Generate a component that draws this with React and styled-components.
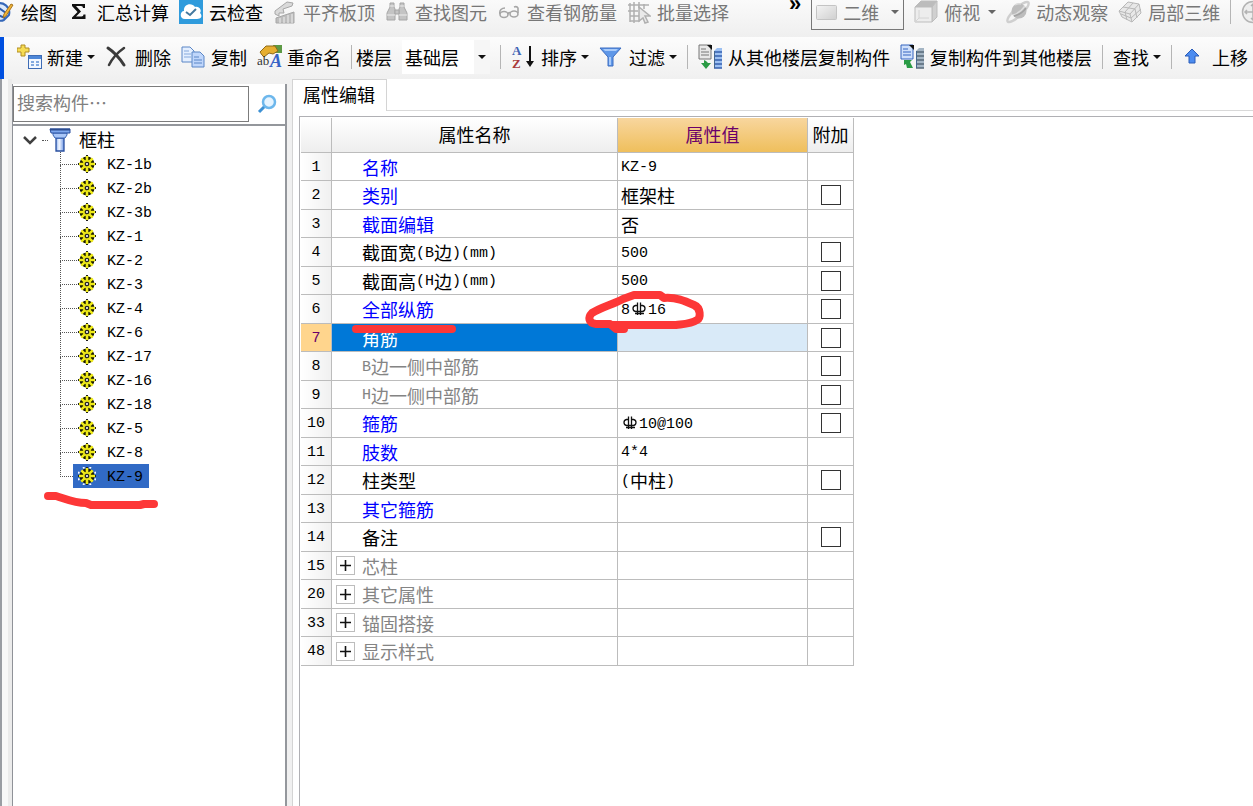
import React from "react";
import styled, { createGlobalStyle } from "styled-components";


const treeItems = [
    "KZ-1b", "KZ-2b", "KZ-3b", "KZ-1", "KZ-2", "KZ-3", "KZ-4",
    "KZ-6", "KZ-17", "KZ-16", "KZ-18", "KZ-5", "KZ-8", "KZ-9",
];

const rows = [
    { no: 1, name: "名称", tone: "blue", value: "KZ-9" },
    { no: 2, name: "类别", tone: "blue", value: "框架柱", check: true },
    { no: 3, name: "截面编辑", tone: "blue", value: "否" },
    { no: 4, name: "截面宽(B边)(mm)", value: "500", check: true },
    { no: 5, name: "截面高(H边)(mm)", value: "500", check: true },
    { no: 6, name: "全部纵筋", tone: "blue", value: "8#16", check: true, marked: true },
    { no: 7, name: "角筋", tone: "blue", value: "", check: true, selected: true },
    { no: 8, name: "B边一侧中部筋", tone: "gray", value: "", check: true },
    { no: 9, name: "H边一侧中部筋", tone: "gray", value: "", check: true },
    { no: 10, name: "箍筋", tone: "blue", value: "#10@100", check: true },
    { no: 11, name: "肢数", tone: "blue", value: "4*4" },
    { no: 12, name: "柱类型", value: "(中柱)", check: true },
    { no: 13, name: "其它箍筋", tone: "blue", value: "" },
    { no: 14, name: "备注", value: "", check: true },
    { no: 15, name: "芯柱", tone: "gray", value: "", group: true },
    { no: 20, name: "其它属性", tone: "gray", value: "", group: true },
    { no: 33, name: "锚固搭接", tone: "gray", value: "", group: true },
    { no: 48, name: "显示样式", tone: "gray", value: "", group: true },
];

const tones = { blue: "#0000ff", gray: "#848484", black: "#000" };


/* ---------- icons ---------- */

const BrushIcon = () => (
    <svg width="24" height="24" viewBox="0 0 24 24">
        <path d="M5 4C12 1 20 7 18 15L13 20C9 22 5 19 5 19Z" fill="#dce9fb" stroke="#3567b8" strokeWidth="2" />
        <path d="M8 8L15 13M7 15L14 18" stroke="#2c5cad" strokeWidth="2" />
        <path d="M22 5L15 16L12 18L13 14L20 4Z" fill="#f1b638" stroke="#a8741d" />
    </svg>
);

const SigmaIcon = () => (
    <svg width="24" height="24" viewBox="0 0 24 24">
        <path d="M5 4H18V8H16Q16 6 14 6H9L14 11.500L9 16.500H14.500Q16.500 16.500 16.500 14.500H18.500V19H5V17.500L10.500 12L5 6Z" fill="#111" />
    </svg>
);

const CloudIcon = () => (
    <svg width="24" height="24" viewBox="0 0 24 24">
        <rect width="24" height="24" fill="#2f9bdc" />
        <path d="M6 19C0 19 1 11 5 11C4 4 13 2 16 7C21 6 23 11 21 13C24 16 22 19 18 19Z" fill="#fff" />
        <path d="M7 12L11 15L17 9" fill="none" stroke="#44799f" strokeWidth="2" />
    </svg>
);

const SlabIcon = () => (
    <svg width="24" height="24" viewBox="0 0 24 24" fill="#dadada" stroke="#a7a7a7">
        <path d="M2 11L14 2L20 3L19 6L10 9L11 13H6V16L2 14Z" />
        <path d="M3 18L21 12V23H3Z" fill="#bdbdbd" />
        <path d="M7 18V23M11 17V23M15 15V23M19 14V23" stroke="#efefef" />
    </svg>
);

const BinocularsIcon = () => (
    <svg width="24" height="24" viewBox="0 0 24 24" fill="#c4c4c4" stroke="#a6a6a6">
        <path d="M5 3H9V7L10 9V20H2V13L5 7Z" />
        <path d="M15 3H19V7L22 13V20H14V9L15 7Z" />
        <path d="M10 10H14V14H10Z" />
        <path d="M2 15H10M14 15H22M5 6H9M15 6H19" stroke="#eee" />
    </svg>
);

const GlassesIcon = () => (
    <svg width="24" height="24" viewBox="0 0 24 24" fill="none" stroke="#a6a6a6" strokeWidth="1.600">
        <ellipse cx="7" cy="14.500" rx="4" ry="3" />
        <ellipse cx="17" cy="14" rx="4" ry="3" />
        <path d="M3 14C2 10 5 8 8 8M11 14Q12 12 13 13M21 13V8Q20 6 17 7" />
    </svg>
);

const BatchIcon = () => (
    <svg width="24" height="24" viewBox="0 0 24 24" fill="none" stroke="#b0b0b0" strokeWidth="1.500">
        <path d="M3 3V22M7 2V23M1 5H22M1 11H11M3 16H12M3 21H13M12 2V8M17 4V9" />
        <path d="M12 7L23 16H18L21 22L18 23L16 18L12 21Z" fill="#e9e9e9" />
    </svg>
);

const MonitorIcon = () => (
    <svg width="22" height="24" viewBox="0 0 22 24">
        <defs>
            <linearGradient id="pane" x1="0" y1="0" x2="1" y2="1">
                <stop offset="0" stopColor="#f4f4f4" />
                <stop offset="1" stopColor="#cfcfcf" />
            </linearGradient>
        </defs>
        <rect x="0.500" y="5.500" width="20" height="14" rx="1" fill="url(#pane)" stroke="#c4c4c4" />
    </svg>
);

const CubeIcon = () => (
    <svg width="24" height="24" viewBox="0 0 24 24" stroke="#bdbdbd" fill="#ededed">
        <path d="M1 7L7 1H23L18 7Z" fill="#bcbcbc" />
        <path d="M18 7L23 1V17L18 22Z" fill="#d0d0d0" />
        <path d="M1 7H18V22H1Z" />
        <path d="M5 10V18L1 22M5 18H15" fill="none" stroke="#d4d4d4" />
    </svg>
);

const OrbitIcon = () => (
    <svg width="24" height="24" viewBox="0 0 24 24">
        <ellipse cx="12" cy="12" rx="14" ry="4" transform="rotate(-43 12 12)" fill="none" stroke="#cfcfcf" strokeWidth="2.500" />
        <circle cx="13" cy="11" r="7.500" fill="#bdbdbd" />
        <path d="M7 15Q14 13 19 6M9 5Q12 3 15 4" fill="none" stroke="#dcdcdc" strokeWidth="1.500" />
        <path d="M8 16Q16 14 20 8" fill="none" stroke="#a3a3a3" strokeWidth="1.500" />
    </svg>
);

const LocalCubeIcon = () => (
    <svg width="24" height="24" viewBox="0 0 24 24" stroke="#b8b8b8" fill="#e8e8e8">
        <path d="M1 11L10 2L21 4L23 13L14 22L4 17Z" />
        <path d="M1 11L12 14L21 4M12 14L14 22M5 7L17 9L19 18M7 12L15 3M3 14L13 18L23 9M7 12L9 20" fill="none" />
    </svg>
);

const PanIcon = () => (
    <svg width="24" height="24" viewBox="0 0 24 24" fill="none" stroke="#b3b3b3" strokeWidth="1.500">
        <circle cx="12" cy="12" r="10.500" fill="#eee" />
        <path d="M12 4V20M4 12H20M10 6L12 4L14 6M6 10L4 12L6 14M10 18L12 20L14 18M18 10L20 12L18 14" />
    </svg>
);

const NewIcon = () => (
    <svg width="26" height="26" viewBox="0 0 26 26">
        <path d="M4 1H8V4H12V8H8V12H4V8H0V4H4Z" fill="#f6dc54" stroke="#b08c22" />
        <rect x="11.500" y="11.500" width="13" height="13" fill="#f2f7ff" stroke="#3e6cb5" />
        <path d="M12 12H24V15H12Z" fill="#4e87d8" />
        <path d="M14 18H17M19 18H22M14 21H17M19 21H22" stroke="#84aadf" strokeWidth="2" />
    </svg>
);

const DeleteIcon = () => (
    <svg width="24" height="24" viewBox="0 0 24 24" fill="none" stroke="#3b3b3b" strokeLinecap="round">
        <path d="M3 3Q12 9 19 20" strokeWidth="3" />
        <path d="M19 3Q9 10 4 20" strokeWidth="2.500" />
    </svg>
);

const CopyIcon = () => (
    <svg width="24" height="24" viewBox="0 0 24 24" fill="#e4efff" stroke="#5b86c6">
        <path d="M1 2H9L13 6V17H1Z" />
        <path d="M3 6H8M3 9H10M3 12H10" stroke="#86a9dc" />
        <path d="M11 7H19L23 11V22H11Z" fill="#bfd6fb" />
        <path d="M13 12H18M13 15H21M13 18H21" />
    </svg>
);

const RenameIcon = () => (
    <svg width="26" height="26" viewBox="0 0 26 26">
        <path d="M16 1H25V9H18Z" fill="#5d9a45" />
        <path d="M3 8L9 2H18L21 7L16 10L12 9L7 13L5 11Z" fill="#e6ae30" stroke="#8f6a1a" />
        <text x="0" y="21" fontFamily="Liberation Serif, serif" fontSize="13" fill="#333">ab</text>
        <text x="13" y="23" fontFamily="Liberation Serif, serif" fontSize="18" fontStyle="italic" fontWeight="700" fill="#3763c6">A</text>
    </svg>
);

const SortIcon = () => (
    <svg width="24" height="28" viewBox="0 0 24 28">
        <text x="1" y="12" fontFamily="Liberation Serif, serif" fontSize="13" fontWeight="700" fill="#4164b4">A</text>
        <text x="1" y="25" fontFamily="Liberation Serif, serif" fontSize="13" fontWeight="700" fill="#a93a3a">Z</text>
        <path d="M19 3V20" stroke="#111" strokeWidth="2" />
        <path d="M15 18H23L19 24Z" fill="#111" />
    </svg>
);

const FilterIcon = () => (
    <svg width="24" height="24" viewBox="0 0 24 24">
        <path d="M1 3H22L14 12V21H9V12Z" fill="#5e97e8" stroke="#3c6cc0" />
        <path d="M4 4H19L17 6H6Z" fill="#a9cbfa" />
        <path d="M10 12H12V20H10Z" fill="#a9cbfa" />
    </svg>
);

const FloorCopyIcon = ({ out }) => (
    <svg width="26" height="26" viewBox="0 0 26 26">
        <path d="M1 1H13V15H1Z" fill={out ? "#cfe0fb" : "#e8e8e8"} stroke={out ? "#3565c0" : "#777"} />
        <path d="M9 1H14V6Z" fill="#111" />
        <path d="M3 5H8M3 8H11M3 11H11" stroke={out ? "#3565c0" : "#777"} />
        <path d={out ? "M4 16H12L10 18L13 24H7L6 20L4 21Z" : "M6 16V19L3 19L8 25L13 19H10L8 17Z"} fill="#2a9b45" />
        <path d="M16 7L19 4H24V24H16Z" fill={out ? "#a4b5c4" : "#9cc0f2"} />
        <path d="M16 8H24M16 12H24M16 16H24M16 20H24M16 24H24" stroke={out ? "#576978" : "#345fae"} strokeWidth="1.500" />
        <path d="M16.500 7V24" stroke="#45678f" />
    </svg>
);

const UpIcon = () => (
    <svg width="24" height="24" viewBox="0 0 24 24">
        <path d="M10 4L17 11H13V18H7V11H3Z" fill="#4c8cf0" stroke="#2a5cb8" />
    </svg>
);

const SearchIcon = () => (
    <svg width="20" height="20" viewBox="0 0 20 20">
        <path d="M2 18L8 12" stroke="#3d91d4" strokeWidth="3" />
        <circle cx="12" cy="8" r="6" fill="#e6f4ff" stroke="#6db7ec" strokeWidth="2.500" />
    </svg>
);

const ColumnIcon = () => (
    <svg width="22" height="24" viewBox="0 0 22 24">
        <defs>
            <linearGradient id="shaft">
                <stop offset="0" stopColor="#8db2f2" />
                <stop offset="0.400" stopColor="#f4f8ff" />
                <stop offset="1" stopColor="#6f98e6" />
            </linearGradient>
        </defs>
        <path d="M7 10H15V23H7Z" fill="url(#shaft)" stroke="#284f9f" strokeWidth="1.300" />
        <path d="M4 5H18V7L16 10H6L4 7Z" fill="#a9c6f7" stroke="#3b66b4" />
        <path d="M1 1H21V5H2Z" fill="#7ea8ee" stroke="#284f9f" />
        <path d="M1 1.500H21" stroke="#2d4d90" strokeWidth="2" />
    </svg>
);

const GearIcon = () => (
    <svg width="18" height="18" viewBox="0 0 18 18">
        <circle cx="9" cy="9" r="7.500" fill="#1c1c00" />
        <path d="M9 1V17M1 9H17M3.300 3.300L14.700 14.700M14.700 3.300L3.300 14.700" stroke="#f0ec18" strokeWidth="2.600" />
        <path d="M6 1.500L5.500 0M12 1.500L12.500 0M6 16.500L5.500 18M12 16.500L12.500 18M1.500 6L0 5.500M1.500 12L0 12.500M16.500 6L18 5.500M16.500 12L18 12.500" stroke="#fff" strokeWidth="2" />
        <path d="M8 0.500H10M8 17.500H10M0.500 8V10M17.500 8V10" stroke="#222" />
        <circle cx="9" cy="9" r="4" fill="#e9e51a" />
        <circle cx="9" cy="9" r="1.700" fill="#fff" stroke="#222" strokeWidth="1.300" />
    </svg>
);

const CaretIcon = ({ color = "#111" }) => (
    <svg width="8" height="6" viewBox="0 0 8 6">
        <path d="M0 1H8L4 5Z" fill={color} />
    </svg>
);

const ChevronIcon = () => (
    <svg width="14" height="10" viewBox="0 0 14 10">
        <path d="M1 2L7 8L13 2" fill="none" stroke="#404040" strokeWidth="2.500" />
    </svg>
);

const RebarIcon = () => (
    <svg width="18" height="16" viewBox="0 0 18 16" fill="none" stroke="#111" strokeWidth="1.300">
        <path d="M7.500 4.500H5.500Q3 5 3 7.500T5.500 10.500H12.500Q15 10 15 7.500T12.500 4.500H10.500" />
        <path d="M7.500 1.500V14M10.500 1.500V14M5 12.500H14" />
    </svg>
);


/* ---------- helpers ---------- */

// latin runs are half the width of a Chinese character, # stands for the bar diameter sign
function MixedText({ text }) {
    return text.split(/(#|[!"$-~]+)/).filter(Boolean).map((part, i) => {
        if (part === "#") return <RebarIcon key={i} />;
        if (/^[!-~]+$/.test(part)) return <Latin key={i}>{part}</Latin>;
        return <span key={i}>{part}</span>;
    });
}

function Tool({ icon, children, caret, muted }) {
    return (
        <ToolButton type="button" $muted={muted}>
            {icon && <IconSlot>{icon}</IconSlot>}
            {children}
            {caret && <CaretSlot $wide={muted}><CaretIcon color={muted ? "#666" : "#111"} /></CaretSlot>}
        </ToolButton>
    );
}


export default function App() {
    return (
        <Page>
            <GlobalStyle />
            <MainBar>
                <Tool icon={<BrushIcon />}>绘图</Tool>
                <Tool icon={<SigmaIcon />}>汇总计算</Tool>
                <Tool icon={<CloudIcon />}>云检查</Tool>
                <Tool muted icon={<SlabIcon />}>平齐板顶</Tool>
                <Tool muted icon={<BinocularsIcon />}>查找图元</Tool>
                <Tool muted icon={<GlassesIcon />}>查看钢筋量</Tool>
                <Tool muted icon={<BatchIcon />}>批量选择</Tool>
                <MoreButton type="button">»</MoreButton>
                <ViewPicker>
                    <MonitorIcon />
                    <PlainSelect aria-label="视图" $muted defaultValue="二维">
                        <option>二维</option>
                    </PlainSelect>
                    <CaretIcon color="#666" />
                </ViewPicker>
                <Tool muted caret icon={<CubeIcon />}>俯视</Tool>
                <Tool muted icon={<OrbitIcon />}>动态观察</Tool>
                <Tool muted icon={<LocalCubeIcon />}>局部三维</Tool>
                <Separator />
                <Tool muted icon={<PanIcon />} />
            </MainBar>

            <EditBar>
                <Tool caret icon={<NewIcon />}>新建</Tool>
                <Tool icon={<DeleteIcon />}>删除</Tool>
                <Tool icon={<CopyIcon />}>复制</Tool>
                <Tool icon={<RenameIcon />}>重命名</Tool>
                <Separator $tight />
                <label htmlFor="floor">楼层</label>
                <FloorPicker>
                    <PlainSelect id="floor" defaultValue="基础层">
                        <option>基础层</option>
                    </PlainSelect>
                    <FloorCaret><CaretIcon /></FloorCaret>
                </FloorPicker>
                <Separator />
                <Tool caret icon={<SortIcon />}>排序</Tool>
                <Tool caret icon={<FilterIcon />}>过滤</Tool>
                <Separator />
                <Tool icon={<FloorCopyIcon />}>从其他楼层复制构件</Tool>
                <Tool icon={<FloorCopyIcon out />}>复制构件到其他楼层</Tool>
                <Separator />
                <Tool caret>查找</Tool>
                <Separator />
                <Tool icon={<UpIcon />}>上移</Tool>
            </EditBar>

            <Workspace>
                <SideStrip />
                <TreePanel>
                    <SearchRow>
                        <SearchInput type="text" aria-label="搜索构件" placeholder="搜索构件…" />
                        <SearchButton type="button" aria-label="搜索"><SearchIcon /></SearchButton>
                    </SearchRow>
                    <Tree>
                        <li>
                            <RootRow type="button">
                                <ChevronIcon />
                                <RootDots />
                                <ColumnIcon />
                                <RootLabel>框柱</RootLabel>
                            </RootRow>
                            <Branches>
                                {treeItems.map((item, i) => (
                                    <Leaf key={item}>
                                        <Elbow $last={i === treeItems.length - 1} />
                                        <LeafButton type="button" $selected={item === "KZ-9"}>
                                            <GearIcon />
                                            <Latin>{item}</Latin>
                                        </LeafButton>
                                        {item === "KZ-9" && (
                                            <TreeMark width="116" height="20" viewBox="0 0 116 20">
                                                <path d="M4 5H12C22 8 30 12 42 12L47 14H96L100 13H110" />
                                            </TreeMark>
                                        )}
                                    </Leaf>
                                ))}
                            </Branches>
                        </li>
                    </Tree>
                </TreePanel>

                <EditorPanel>
                    <TabRow>
                        <Tab type="button">属性编辑</Tab>
                        <TabFill />
                    </TabRow>
                    <TableFrame>
                        <PropertyTable>
                            <colgroup>
                                <NumberCol />
                                <NameCol />
                                <ValueCol />
                                <ExtraCol />
                            </colgroup>
                            <thead>
                                <tr>
                                    <HeadCell />
                                    <HeadCell>属性名称</HeadCell>
                                    <HeadCell $active>属性值</HeadCell>
                                    <HeadCell>附加</HeadCell>
                                </tr>
                            </thead>
                            <tbody>
                                {rows.map((row) => (
                                    <Row key={row.no}>
                                        <NumberCell $selected={row.selected}>{row.no}</NumberCell>
                                        <NameCell $tone={row.tone} $selected={row.selected}>
                                            <NameBox>
                                                <Gutter>
                                                    {row.group && <Expand type="button" aria-label={"展开" + row.name}>
                                                        <svg width="11" height="11" viewBox="0 0 11 11">
                                                            <path d="M0 5.500H11M5.500 0V11" stroke="#111" strokeWidth="1.600" />
                                                        </svg>
                                                    </Expand>}
                                                </Gutter>
                                                <MixedText text={row.name} />
                                                {row.marked && (
                                                    <NameMark width="106" height="10" viewBox="0 0 106 10">
                                                        <path d="M5 5H101" />
                                                    </NameMark>
                                                )}
                                            </NameBox>
                                        </NameCell>
                                        <ValueCell $selected={row.selected}>
                                            <ValueBox>
                                                <MixedText text={row.value} />
                                                {row.marked && (
                                                    <ValueMark width="122" height="44" viewBox="0 0 122 44">
                                                        <path d="M40 38H32L26 33H12C4 32 4 26 8 22C18 16 30 13 39 8L50 4H76L80 7C92 6 101 10 110 14C117 17 117 27 113 29C107 33 100 33 92 34H28" />
                                                    </ValueMark>
                                                )}
                                            </ValueBox>
                                        </ValueCell>
                                        <CheckCell>
                                            {row.check && <CheckBox type="checkbox" aria-label={row.name + "附加"} />}
                                        </CheckCell>
                                    </Row>
                                ))}
                            </tbody>
                        </PropertyTable>
                    </TableFrame>
                </EditorPanel>
            </Workspace>
        </Page>
    );
}


const GlobalStyle = createGlobalStyle`
    * {
        box-sizing: border-box;
    }

    body {
        margin: 0;
        background: #f0f0f0;
    }

    body, button, input, select {
        font-family: "Noto Sans CJK SC", sans-serif;
        font-size: 18px;
        line-height: 24px;
        color: #000;
    }

    svg {
        display: block;
        flex: none;
    }
`

const Page = styled.div`
    display: flex;
    flex-direction: column;
    height: 100vh;
    overflow: hidden;
`

const Bar = styled.div`
    display: flex;
    align-items: center;
    gap: 10px;
    overflow: hidden;
    white-space: nowrap;
    flex: none;
`

const MainBar = styled(Bar)`
    height: 37px;
    padding-bottom: 14px;
    background: linear-gradient(#fafafa, #efefef);

    > :first-child {
        margin-left: -9px;
    }
`

const EditBar = styled(Bar)`
    height: 42px;
    padding-left: 13px;
    padding-bottom: 2px;
    border-left: 4px solid #0050e0;
    background: linear-gradient(#fcfcfc, #f0f0f0);
`

const ToolButton = styled.button`
    display: flex;
    align-items: center;
    flex: none;
    padding: 0;
    border: 0;
    background: none;
    color: ${(props) => (props.$muted ? "#777" : "#000")};
`

const IconSlot = styled.span`
    display: flex;
    width: 30px;
`

const CaretSlot = styled.span`
    margin-left: ${(props) => (props.$wide ? "8px" : "4px")};
`

const MoreButton = styled.button`
    align-self: flex-start;
    padding: 0;
    margin: 0 0 0 50px;
    border: 0;
    background: none;
    font-family: "Liberation Sans", sans-serif;
    font-size: 22px;
    font-weight: 700;
    line-height: 8px;
    flex: none;
`

const Separator = styled.span`
    flex: none;
    width: 1px;
    height: 24px;
    background: #b5b5b5;
    margin-right: ${(props) => (props.$tight ? "-6px" : "0")};
`

const ViewPicker = styled.div`
    display: flex;
    align-items: center;
    flex: none;
    gap: 5px;
    width: 93px;
    height: 36px;
    padding: 0 4px;
    border: 1px solid #777;
`

const PlainSelect = styled.select`
    appearance: none;
    flex: 1;
    min-width: 0;
    padding: 0;
    border: 0;
    background: none;
    color: ${(props) => (props.$muted ? "#777" : "#000")};
`

const FloorPicker = styled.div`
    display: flex;
    flex: none;
    width: 88px;
    height: 34px;
    padding-left: 3px;
    background: #fff;
`

const FloorCaret = styled.span`
    display: flex;
    align-items: center;
    justify-content: center;
    width: 16px;
    background: #f6f6f6;
`

const Workspace = styled.div`
    display: flex;
    flex: 1;
    min-height: 0;
`

const SideStrip = styled.div`
    width: 12px;
    flex: none;
    border-left: 2px solid #9a9da3;
    background: linear-gradient(90deg, #f8f8f8 6px, #ebebeb 6px);
`

const TreePanel = styled.aside`
    display: flex;
    flex-direction: column;
    flex: none;
    width: 275px;
    margin-top: 5px;
    border-left: 1px solid #8f9298;
    border-right: 2px solid #94979c;
    background: #fff;
`

const SearchRow = styled.div`
    display: flex;
    align-items: center;
    height: 42px;
    border-bottom: 2px solid #94979c;
`

const SearchInput = styled.input`
    width: 236px;
    height: 36px;
    padding: 0 3px 4px;
    border: 1px solid #7c7c7c;
    background: #fff;
    outline: 0;

    &::placeholder {
        color: #808080;
        opacity: 1;
    }
`

const SearchButton = styled.button`
    display: flex;
    align-items: center;
    justify-content: center;
    flex: 1;
    padding: 0;
    border: 0;
    background: none;
`

const Tree = styled.ul`
    list-style: none;
    margin: 0;
    padding: 2px 0 0 10px;
`

const RootRow = styled.button`
    display: flex;
    align-items: center;
    height: 24px;
    padding: 0;
    border: 0;
    background: none;
`

const RootDots = styled.span`
    width: 6px;
    margin: 0 1px 0 5px;
    border-bottom: 1px dotted #555;
`

const RootLabel = styled.span`
    margin-left: 8px;
    padding-bottom: 2px;
`

const Branches = styled.ul`
    list-style: none;
    margin: 0;
    padding-left: 37px;
`

const Leaf = styled.li`
    position: relative;
    display: flex;
    height: 24px;
`

const Elbow = styled.span`
    width: 17px;

    &::before, &::after {
        content: "";
        display: block;
        height: 12px;
        border-left: 1px dotted #555;
    }

    &::before {
        border-bottom: 1px dotted #555;
    }

    &::after {
        border-left-style: ${(props) => (props.$last ? "none" : "dotted")};
    }
`

const LeafButton = styled.button`
    display: flex;
    align-items: center;
    gap: 11px;
    padding: 0 6px 0 5px;
    margin-left: -4px;
    border: 0;
    background: ${(props) => (props.$selected ? "#316ac5" : "none")};
`

const Latin = styled.span`
    padding-top: 3px;
    font-family: "Liberation Mono", monospace;
    font-size: 15px;
`

const Mark = styled.svg`
    position: absolute;
    z-index: 1;
    pointer-events: none;
    fill: none;
    stroke: #fd3737;
    stroke-width: 8px;
    stroke-linecap: round;
    stroke-linejoin: round;
`

const TreeMark = styled(Mark)`
    left: -16px;
    top: 27px;
`

const NameMark = styled(Mark)`
    left: 19px;
    top: 27px;
`

const ValueMark = styled(Mark)`
    left: -34px;
    top: -6px;
`

const EditorPanel = styled.main`
    display: flex;
    flex-direction: column;
    flex: 1;
    min-width: 0;
    margin-left: 5px;
    border-left: 1px solid #d4d4d4;
    background: #fff;
`

const TabRow = styled.div`
    display: flex;
    height: 32px;
`

const Tab = styled.button`
    padding: 0 11px 4px 10px;
    border: 0;
    border-top: 1px solid #d4d4d4;
    border-right: 1px solid #d4d4d4;
    background: #fff;
`

const TabFill = styled.div`
    flex: 1;
    border-bottom: 1px solid #d9d9d9;
`

const TableFrame = styled.div`
    flex: 1;
    margin: 5px 0 0 6px;
    padding: 1px 0 0 1px;
    border-top: 1px solid #b0b0b4;
    border-left: 1px solid #b0b0b4;
`

const PropertyTable = styled.table`
    table-layout: fixed;
    width: 553px;
    border-collapse: separate;
    border-spacing: 0;
`

const NumberCol = styled.col`
    width: 31px;
`

const NameCol = styled.col`
    width: 286px;
`

const ValueCol = styled.col`
    width: 190px;
`

const ExtraCol = styled.col`
    width: 46px;
`

const HeadCell = styled.th`
    height: 35px;
    padding: 0 0 2px;
    font-weight: 400;
    color: ${(props) => (props.$active ? "#6a006a" : "#000")};
    background: ${(props) => (props.$active ? "linear-gradient(#f8d69e, #efbf5c)" : "linear-gradient(#fff, #eee)")};
    border-right: 1px solid #bcbcbc;
    border-bottom: 1px solid #bcbcbc;
`

const Row = styled.tr`
    height: 28px;

    &:nth-child(even) {
        height: 29px;
    }
`

const Cell = styled.td`
    padding: 0;
    border-right: 1px solid #bcbcbc;
    border-bottom: 1px solid #bcbcbc;
`

const NumberCell = styled(Cell)`
    padding-top: 2px;
    text-align: center;
    font-family: "Liberation Mono", monospace;
    font-size: 15px;
    color: ${(props) => (props.$selected ? "#6a006a" : "#000")};
    background: ${(props) => (props.$selected ? "#ffd58d" : "linear-gradient(90deg, #fff, #f0f0f0)")};
`

const NameCell = styled(Cell)`
    color: ${(props) => (props.$selected ? "#fff" : tones[props.$tone || "black"])};
    background: ${(props) => (props.$selected ? "#0078d7" : "#fff")};
`

const NameBox = styled.div`
    position: relative;
    display: flex;
    align-items: center;
    height: 24px;
`

const Gutter = styled.span`
    width: 30px;
    padding-left: 4px;
`

const Expand = styled.button`
    display: flex;
    align-items: center;
    justify-content: center;
    width: 19px;
    height: 19px;
    padding: 0;
    border: 1px solid #bdbdbd;
    background: #fff;
`

const ValueCell = styled(Cell)`
    background: ${(props) => (props.$selected ? "#d9eaf8" : "#fff")};
`

const ValueBox = styled.div`
    position: relative;
    display: flex;
    align-items: center;
    height: 24px;
    padding-left: 3px;
`

const CheckCell = styled(Cell)`
    text-align: center;
`

const CheckBox = styled.input`
    appearance: none;
    display: block;
    width: 20px;
    height: 20px;
    margin: 0 auto;
    border: 1px solid #333;
    background: #fff;

    &:checked {
        background: #333;
    }
`
